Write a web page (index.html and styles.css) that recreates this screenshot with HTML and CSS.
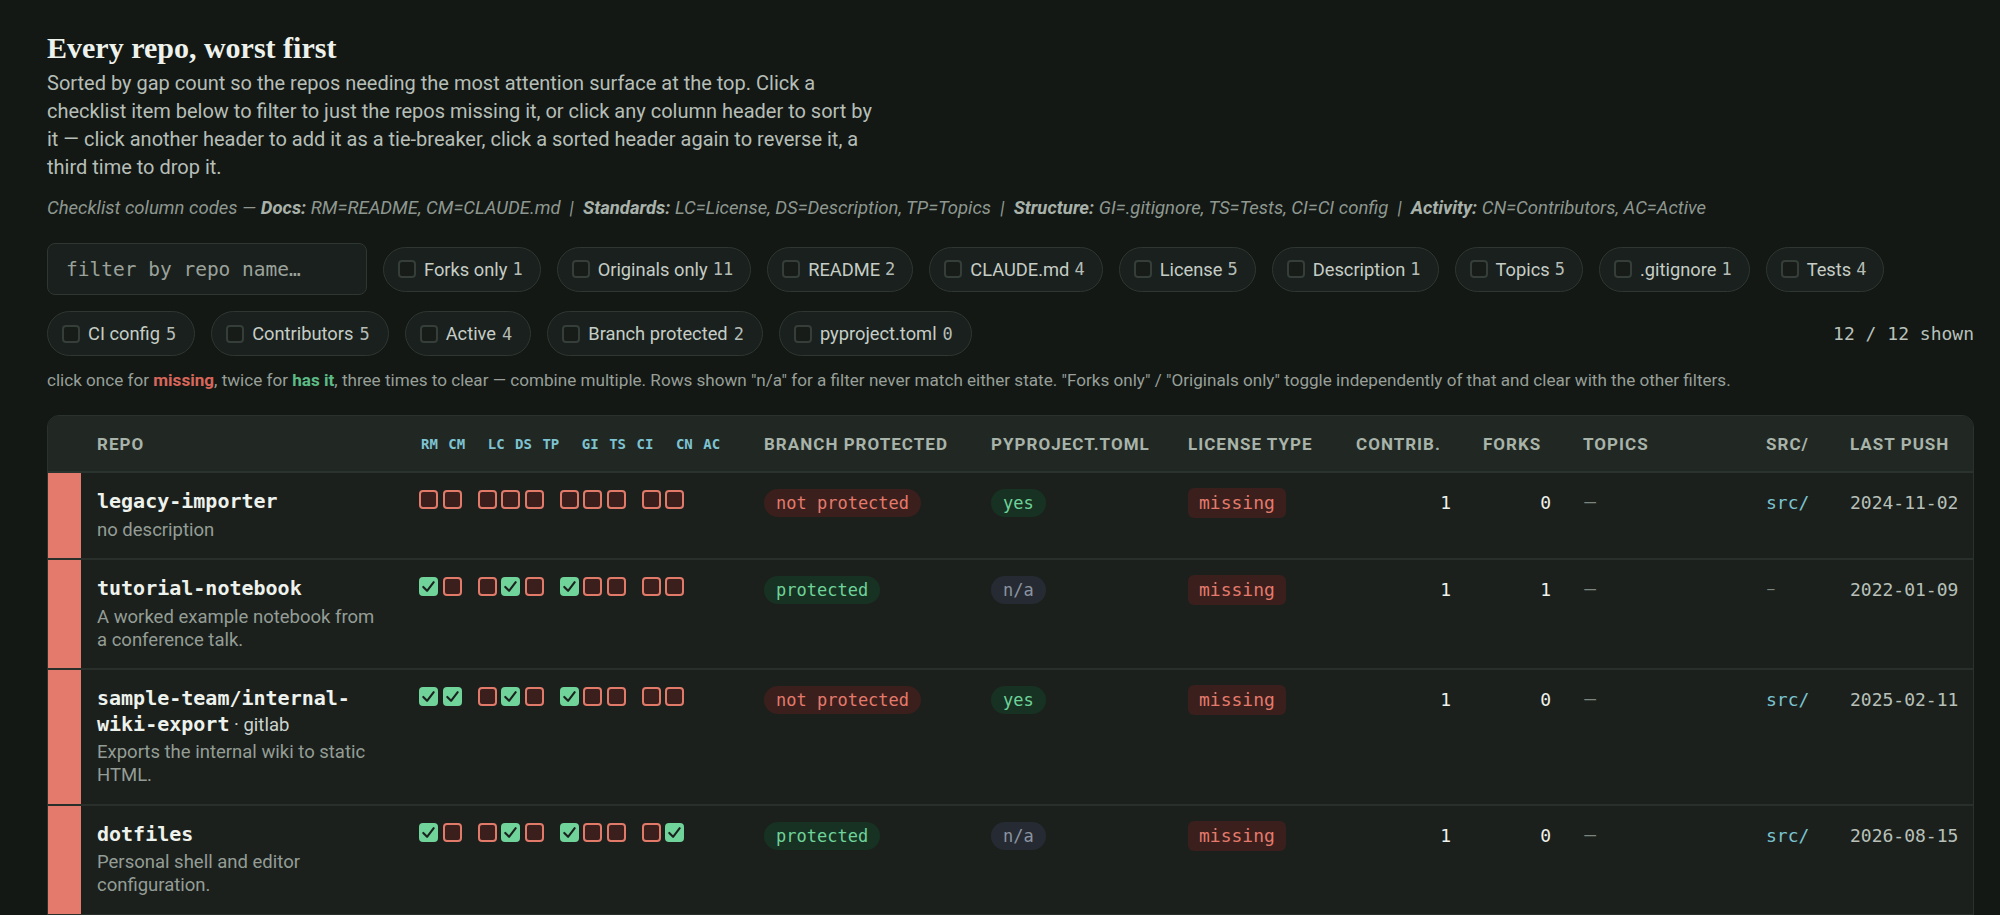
FILE: index.html
```html
<!DOCTYPE html>
<html lang="en">
<head>
<meta charset="utf-8">
<title>Every repo, worst first</title>
<link rel="stylesheet" href="styles.css">
</head>
<body>
<main class="page">
  <h1 class="title">Every repo, worst first</h1>
  <p class="lede">Sorted by gap count so the repos needing the most attention surface at the top. Click a checklist item below to filter to just the repos missing it, or click any column header to sort by it — click another header to add it as a tie-breaker, click a sorted header again to reverse it, a third time to drop it.</p>
  <p class="codes">Checklist column codes — <b>Docs:</b> RM=README, CM=CLAUDE.md &nbsp;|&nbsp; <b>Standards:</b> LC=License, DS=Description, TP=Topics &nbsp;|&nbsp; <b>Structure:</b> GI=.gitignore, TS=Tests, CI=CI config &nbsp;|&nbsp; <b>Activity:</b> CN=Contributors, AC=Active</p>

  <div class="filters">
    <input class="search" type="text" placeholder="filter by repo name…">
    <span class="chip"><span class="box"></span>Forks only <span class="num">1</span></span>
    <span class="chip"><span class="box"></span>Originals only <span class="num">11</span></span>
    <span class="chip"><span class="box"></span>README <span class="num">2</span></span>
    <span class="chip"><span class="box"></span>CLAUDE.md <span class="num">4</span></span>
    <span class="chip"><span class="box"></span>License <span class="num">5</span></span>
    <span class="chip"><span class="box"></span>Description <span class="num">1</span></span>
    <span class="chip"><span class="box"></span>Topics <span class="num">5</span></span>
    <span class="chip"><span class="box"></span>.gitignore <span class="num">1</span></span>
    <span class="chip"><span class="box"></span>Tests <span class="num">4</span></span>
    <span class="chip wide"><span class="box"></span>CI config <span class="num">5</span></span>
    <span class="chip wide"><span class="box"></span>Contributors <span class="num">5</span></span>
    <span class="chip wide"><span class="box"></span>Active <span class="num">4</span></span>
    <span class="chip wide"><span class="box"></span>Branch protected <span class="num">2</span></span>
    <span class="chip wide"><span class="box"></span>pyproject.toml <span class="num">0</span></span>
    <span class="shown">12 / 12 shown</span>
  </div>

  <p class="hint">click once for <b class="miss">missing</b>, twice for <b class="has">has it</b>, three times to clear — combine multiple. Rows shown "n/a" for a filter never match either state. "Forks only" / "Originals only" toggle independently of that and clear with the other filters.</p>

  <div class="card">
    <table class="repos">
      <colgroup>
        <col class="c-strip"><col class="c-repo"><col class="c-checks"><col class="c-branch"><col class="c-py"><col class="c-lic"><col class="c-contrib"><col class="c-forks"><col class="c-topics"><col class="c-src"><col class="c-push">
      </colgroup>
      <thead>
        <tr>
          <th></th>
          <th>Repo</th>
          <th class="codes-head">
            <span class="grp"><span>RM</span><span>CM</span></span><span class="grp"><span>LC</span><span>DS</span><span>TP</span></span><span class="grp"><span>GI</span><span>TS</span><span>CI</span></span><span class="grp"><span>CN</span><span>AC</span></span>
          </th>
          <th>Branch protected</th>
          <th>pyproject.toml</th>
          <th>License type</th>
          <th>Contrib.</th>
          <th>Forks</th>
          <th>Topics</th>
          <th>src/</th>
          <th>Last push</th>
        </tr>
      </thead>
      <tbody>
        <tr>
          <td class="strip red"></td>
          <td class="repo"><div class="name">legacy-importer</div><div class="desc">no description</div></td>
          <td class="checks">
            <span class="grp"><i class="sq no"></i><i class="sq no"></i></span><span class="grp"><i class="sq no"></i><i class="sq no"></i><i class="sq no"></i></span><span class="grp"><i class="sq no"></i><i class="sq no"></i><i class="sq no"></i></span><span class="grp"><i class="sq no"></i><i class="sq no"></i></span>
          </td>
          <td><span class="pill bad">not protected</span></td>
          <td><span class="pill good">yes</span></td>
          <td><span class="tag bad">missing</span></td>
          <td class="n">1</td>
          <td class="n">0</td>
          <td class="dim">—</td>
          <td class="src">src/</td>
          <td class="date">2024-11-02</td>
        </tr>
        <tr>
          <td class="strip red"></td>
          <td class="repo"><div class="name">tutorial-notebook</div><div class="desc">A worked example notebook from a conference talk.</div></td>
          <td class="checks">
            <span class="grp"><i class="sq ok"><svg viewBox="0 0 20 20"><path d="M4.5 10.5 L8.5 14.5 L15.5 5.5"/></svg></i><i class="sq no"></i></span><span class="grp"><i class="sq no"></i><i class="sq ok"><svg viewBox="0 0 20 20"><path d="M4.5 10.5 L8.5 14.5 L15.5 5.5"/></svg></i><i class="sq no"></i></span><span class="grp"><i class="sq ok"><svg viewBox="0 0 20 20"><path d="M4.5 10.5 L8.5 14.5 L15.5 5.5"/></svg></i><i class="sq no"></i><i class="sq no"></i></span><span class="grp"><i class="sq no"></i><i class="sq no"></i></span>
          </td>
          <td><span class="pill good">protected</span></td>
          <td><span class="pill na">n/a</span></td>
          <td><span class="tag bad">missing</span></td>
          <td class="n">1</td>
          <td class="n">1</td>
          <td class="dim">—</td>
          <td class="dim small">–</td>
          <td class="date">2022-01-09</td>
        </tr>
        <tr>
          <td class="strip red"></td>
          <td class="repo"><div class="name"><span>sample-team/internal-</span><wbr><span>wiki-export</span><span class="host"> · gitlab</span></div><div class="desc">Exports the internal wiki to static HTML.</div></td>
          <td class="checks">
            <span class="grp"><i class="sq ok"><svg viewBox="0 0 20 20"><path d="M4.5 10.5 L8.5 14.5 L15.5 5.5"/></svg></i><i class="sq ok"><svg viewBox="0 0 20 20"><path d="M4.5 10.5 L8.5 14.5 L15.5 5.5"/></svg></i></span><span class="grp"><i class="sq no"></i><i class="sq ok"><svg viewBox="0 0 20 20"><path d="M4.5 10.5 L8.5 14.5 L15.5 5.5"/></svg></i><i class="sq no"></i></span><span class="grp"><i class="sq ok"><svg viewBox="0 0 20 20"><path d="M4.5 10.5 L8.5 14.5 L15.5 5.5"/></svg></i><i class="sq no"></i><i class="sq no"></i></span><span class="grp"><i class="sq no"></i><i class="sq no"></i></span>
          </td>
          <td><span class="pill bad">not protected</span></td>
          <td><span class="pill good">yes</span></td>
          <td><span class="tag bad">missing</span></td>
          <td class="n">1</td>
          <td class="n">0</td>
          <td class="dim">—</td>
          <td class="src">src/</td>
          <td class="date">2025-02-11</td>
        </tr>
        <tr>
          <td class="strip red"></td>
          <td class="repo"><div class="name">dotfiles</div><div class="desc">Personal shell and editor configuration.</div></td>
          <td class="checks">
            <span class="grp"><i class="sq ok"><svg viewBox="0 0 20 20"><path d="M4.5 10.5 L8.5 14.5 L15.5 5.5"/></svg></i><i class="sq no"></i></span><span class="grp"><i class="sq no"></i><i class="sq ok"><svg viewBox="0 0 20 20"><path d="M4.5 10.5 L8.5 14.5 L15.5 5.5"/></svg></i><i class="sq no"></i></span><span class="grp"><i class="sq ok"><svg viewBox="0 0 20 20"><path d="M4.5 10.5 L8.5 14.5 L15.5 5.5"/></svg></i><i class="sq no"></i><i class="sq no"></i></span><span class="grp"><i class="sq no"></i><i class="sq ok"><svg viewBox="0 0 20 20"><path d="M4.5 10.5 L8.5 14.5 L15.5 5.5"/></svg></i></span>
          </td>
          <td><span class="pill good">protected</span></td>
          <td><span class="pill na">n/a</span></td>
          <td><span class="tag bad">missing</span></td>
          <td class="n">1</td>
          <td class="n">0</td>
          <td class="dim">—</td>
          <td class="src">src/</td>
          <td class="date">2026-08-15</td>
        </tr>
        <tr class="next">
          <td class="strip amber"></td>
          <td></td><td></td><td></td><td></td><td></td><td></td><td></td><td></td><td></td><td></td>
        </tr>
      </tbody>
    </table>
  </div>
</main>
</body>
</html>
```

FILE: styles.css
```css
* { box-sizing: border-box; }

html, body {
  margin: 0;
  background: #131815;
}

body {
  font-family: Roboto, "Noto Sans", sans-serif;
  color: #c5cdc6;
}

.page {
  padding: 30px 26px 0 47px;
}

.title {
  margin: 0;
  font-family: "Liberation Serif", serif;
  font-weight: 700;
  font-size: 30px;
  line-height: 36px;
  color: #eef2ec;
}

.lede {
  margin: 3px 0 0;
  max-width: 832px;
  font-size: 20px;
  line-height: 28px;
  color: #b6beb7;
}

.codes {
  margin: 15px 0 0;
  font-size: 18.5px;
  line-height: 24px;
  font-style: italic;
  color: #8e978f;
}

.codes b {
  color: #a9b2aa;
}

.filters {
  display: flex;
  flex-wrap: wrap;
  align-items: center;
  gap: 16px;
  margin-top: 23px;
}

.search {
  width: 320px;
  height: 52px;
  padding: 0 18px;
  background: #1a201d;
  border: 1px solid #2e3731;
  border-radius: 8px;
  font-family: "DejaVu Sans Mono", monospace;
  font-size: 19.5px;
  color: #d5dbd5;
  outline: none;
}

.search::placeholder {
  color: #9aa29b;
}

.chip {
  display: inline-flex;
  align-items: center;
  gap: 8px;
  height: 45px;
  padding: 0 17px 0 14px;
  background: #1a201d;
  border: 1px solid #2e3731;
  border-radius: 23px;
  font-size: 18.3px;
  color: #c5cdc6;
  white-space: nowrap;
}

.chip.wide {
  padding: 0 18px 0 14px;
}

.chip.wide .num {
  margin-left: -2px;
}

.box {
  width: 18px;
  height: 18px;
  border: 2px solid #353e38;
  border-radius: 4px;
  background: #171c19;
}

.num {
  margin-left: -3px;
  font-family: "DejaVu Sans Mono", monospace;
  font-size: 17px;
  color: #b4bcb5;
}

.shown {
  margin-left: auto;
  font-family: "DejaVu Sans Mono", monospace;
  font-size: 18px;
  color: #b9c1ba;
}

.hint {
  margin: 13px 0 0;
  font-size: 17.1px;
  line-height: 22px;
  color: #979f98;
}

.hint .miss { color: #d8665a; }
.hint .has { color: #5dbb85; }

.card {
  margin-top: 24px;
  background: #1b201d;
  border: 1px solid #2a322d;
  border-radius: 12px;
  overflow: hidden;
}

.repos {
  width: 100%;
  table-layout: fixed;
  border-collapse: collapse;
}

.c-strip { width: 33px; }
.c-repo { width: 322px; }
.c-checks { width: 345px; }
.c-branch { width: 227px; }
.c-py { width: 197px; }
.c-lic { width: 168px; }
.c-contrib { width: 127px; }
.c-forks { width: 100px; }
.c-topics { width: 183px; }
.c-src { width: 84px; }
.c-push { width: 139px; }

.repos thead th {
  height: 56px;
  padding: 0 16px;
  background: #212823;
  border-bottom: 2px solid #2b332e;
  text-align: left;
  vertical-align: middle;
  font-size: 17px;
  font-weight: 700;
  letter-spacing: 0.06em;
  text-transform: uppercase;
  color: #a8b3aa;
  white-space: nowrap;
}

.repos thead th.codes-head {
  padding-left: 18px;
  font-family: "DejaVu Sans Mono", monospace;
  font-size: 14px;
  letter-spacing: 0;
  color: #7ec3d2;
}

.codes-head .grp {
  display: inline-flex;
  gap: 10.5px;
  margin-right: 22.5px;
}

.repos tbody td {
  padding: 16px 16px 16.5px;
  vertical-align: top;
  border-top: 2px solid #29302b;
}

.repos tbody tr:first-child td { border-top: 0; }

.repos tbody tr.next td { height: 87px; }

.repos td.strip { padding: 0; }
.strip.red { background: #e47a6c; }
.strip.amber { background: #e3a24a; }

.repos td.repo { padding-right: 22px; }

.name {
  font-family: "DejaVu Sans Mono", monospace;
  font-weight: 700;
  font-size: 20px;
  line-height: 25.5px;
  color: #eef2ec;
}

.host {
  font-family: Roboto, sans-serif;
  font-weight: 400;
  font-size: 18.5px;
  line-height: 1;
  color: #cdd4cd;
}

.desc {
  margin-top: 4px;
  font-size: 18.5px;
  line-height: 23px;
  color: #949d95;
}

.repos td.checks {
  padding-top: 17px;
  white-space: nowrap;
}

.checks .grp {
  display: inline-flex;
  gap: 4.5px;
  margin-right: 16px;
  vertical-align: top;
}

.sq {
  display: block;
  width: 19px;
  height: 19px;
  border-radius: 4px;
}

.sq.no {
  border: 2px solid #e27a6a;
  background: #3a1f1c;
}

.sq.ok {
  background: #6fd39a;
}

.sq svg {
  display: block;
  width: 19px;
  height: 19px;
}

.sq svg path {
  fill: none;
  stroke: #1b211e;
  stroke-width: 2.2;
  stroke-linecap: round;
  stroke-linejoin: round;
}

.pill, .tag {
  display: inline-block;
  font-family: "DejaVu Sans Mono", monospace;
  white-space: nowrap;
}

.pill {
  height: 28px;
  padding: 0 12px;
  border-radius: 14px;
  font-size: 17px;
  line-height: 28px;
}

.tag {
  height: 30px;
  margin-top: -1px;
  padding: 0 11px;
  border-radius: 6px;
  font-size: 18px;
  line-height: 30px;
}

.pill.bad, .tag.bad { background: #3a1f1c; color: #e47a6c; }
.pill.good { background: #173222; color: #6fd39a; }
.pill.na { background: #262b33; color: #8c94a0; }

.repos td.n {
  text-align: right;
  font-family: "DejaVu Sans Mono", monospace;
  font-size: 18px;
  line-height: 28px;
  color: #eef2ec;
}

.repos td.dim {
  font-size: 18px;
  line-height: 28px;
  color: #7b857d;
}

.repos td.dim.small {
  font-size: 15px;
}

.repos td.src {
  font-family: "DejaVu Sans Mono", monospace;
  font-size: 18px;
  line-height: 28px;
  color: #7cc4d0;
}

.repos td.date {
  font-family: "DejaVu Sans Mono", monospace;
  font-size: 18px;
  line-height: 28px;
  color: #b8c0b9;
  white-space: nowrap;
}
```
